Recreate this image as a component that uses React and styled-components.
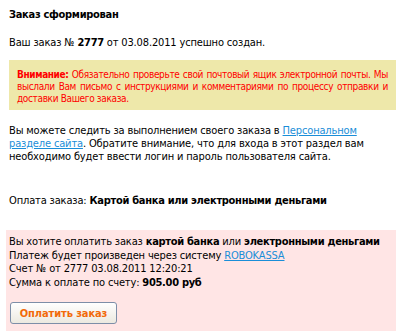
import React from 'react';
import styled, { createGlobalStyle } from 'styled-components';

const GlobalStyle = createGlobalStyle`
    body {
        margin: 0;
        background: #ffffff;
        font-family: "DejaVu Sans Condensed", "DejaVu Sans", Verdana, sans-serif;
        font-size: 11px;
        letter-spacing: -0.15px;
        color: #000000;
    }
    b {
        letter-spacing: -0.3px;
    }
`

const Page = styled.div`
    width: 405px;
    padding: 8px 9px 0 9px;
    box-sizing: border-box;
`

const Title = styled.div`
    font-weight: bold;
    line-height: 14px;
    margin-bottom: 14px;
    letter-spacing: -0.3px;
`

const Text = styled.p`
    margin: 0 0 ${p => p.gap || 0}px 0;
    line-height: 13px;
`

const Notice = styled.div`
    background: #eee8aa;
    color: #ff0000;
    padding: 9px 8px 5px 8px;
    margin: 0 0 14px 0;
    font-size: 10px;
    letter-spacing: -0.35px;
    line-height: 12px;
    text-align: justify;
    b {
        letter-spacing: -0.4px;
    }
`

const Link = styled.a`
    color: #1a8ed8;
    text-decoration: underline;
`

const PayBox = styled.div`
    background: #ffe5e5;
    margin: 0 0 0 -3px;
    padding: 5px 3px 7px 3px;
    line-height: 13.5px;
`

const PayButton = styled.button`
    display: block;
    width: 107px;
    height: 22px;
    margin: 13px 0 0 1px;
    padding: 0;
    border: 1px solid #7d8ea8;
    border-radius: 3px;
    background: linear-gradient(#ffffff, #ece9e0);
    color: #f26a0a;
    font-family: inherit;
    font-size: 11px;
    font-weight: bold;
    letter-spacing: -0.1px;
    cursor: pointer;
`

const App = () => {
    return (
        <>
            <GlobalStyle />
            <Page>
                <Title>Заказ сформирован</Title>
                <Text gap={11}>Ваш заказ № <b>2777</b> от 03.08.2011 успешно создан.</Text>
                <Notice>
                    <b>Внимание:</b> Обязательно проверьте свой почтовый ящик электронной почты. Мы выслали Вам письмо с инструкциями и комментариями по процессу отправки и доставки Вашего заказа.
                </Notice>
                <Text gap={31}>
                    Вы можете следить за выполнением своего заказа в <Link href="#">Персональном разделе сайта</Link>. Обратите внимание, что для входа в этот раздел вам необходимо будет ввести логин и пароль пользователя сайта.
                </Text>
                <Text gap={23}>Оплата заказа: <b>Картой банка или электронными деньгами</b></Text>
                <PayBox>
                    Вы хотите оплатить заказ <b>картой банка</b> или <b>электронными деньгами</b><br />
                    Платеж будет произведен через систему <Link href="#">ROBOKASSA</Link><br />
                    Счет № от 2777 03.08.2011 12:20:21<br />
                    Сумма к оплате по счету: <b>905.00 руб</b>
                    <PayButton>Оплатить заказ</PayButton>
                </PayBox>
            </Page>
        </>
    )
}

export default App
